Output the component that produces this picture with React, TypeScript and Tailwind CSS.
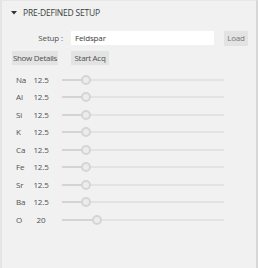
import React from "react";

const rows: { el: string; v: string; n: number }[] = [
  { el: "Na", v: "12.5", n: 12.5 },
  { el: "Al", v: "12.5", n: 12.5 },
  { el: "Si", v: "12.5", n: 12.5 },
  { el: "K", v: "12.5", n: 12.5 },
  { el: "Ca", v: "12.5", n: 12.5 },
  { el: "Fe", v: "12.5", n: 12.5 },
  { el: "Sr", v: "12.5", n: 12.5 },
  { el: "Ba", v: "12.5", n: 12.5 },
  { el: "O", v: "20", n: 20 },
];

function Slider({ n }: { n: number }) {
  const usable = 162 - 10;
  const x = 5 + (n / 100) * usable;
  return (
    <div className="relative h-[10px] w-[162px]">
      <div className="absolute left-0 right-0 top-[4px] h-[2px] bg-[#e2e3e2]" />
      <div className="absolute left-0 top-[4px] h-[2px] bg-[#d3d4d3]" style={{ width: x }} />
      <div
        className="absolute top-0 h-[10px] w-[10px] rounded-full border-2 border-[#d4d5d4] bg-[#ececec]"
        style={{ left: x - 5 }}
      />
    </div>
  );
}

export default function App() {
  return (
    <div
      className="w-[258px] h-[268px] bg-[#f0f1f0] border-l-2 border-r-2 border-l-[#e3e4e3] border-r-[#d6d7d6] border-t border-t-[#e6e7e6] text-[#505050] text-[8px] tracking-[-0.15px]"
      style={{ fontFamily: '"Open Sans", "Noto Sans", sans-serif' }}
    >
      <div className="flex items-center h-[22px] pt-[2px] pl-[9px]">
        <svg width="6" height="4" viewBox="0 0 6 4" className="mr-[6px]">
          <polygon points="0,0 6,0 3,3.5" fill="#333" />
        </svg>
        <span className="text-[8.5px] text-[#3c3c3c] tracking-[-0.2px]">PRE-DEFINED SETUP</span>
      </div>
      <div className="flex items-center h-[14px] mt-[8px]">
        <div className="w-[62px] text-right pr-[1px]">Setup :</div>
        <div className="ml-[7px] w-[143px] h-[14px] bg-white flex items-center pl-[4px] text-[#3c3c3c]">Feldspar</div>
        <div className="ml-[10px] w-[24px] h-[15px] bg-[#e2e3e2] flex items-center justify-center text-[#777]">Load</div>
      </div>
      <div className="flex items-center h-[14px] mt-[6px] pl-[10px]">
        <div className="w-[46px] h-[14px] bg-[#e2e3e2] flex items-center justify-center whitespace-nowrap tracking-[-0.3px]">Show Details</div>
        <div className="ml-[13px] w-[38px] h-[14px] bg-[#e2e3e2] flex items-center justify-center whitespace-nowrap tracking-[-0.3px]">Start Acq</div>
      </div>
      <div className="flex flex-col mt-[6px]">
        {rows.map((r) => (
          <div key={r.el} className="flex items-center h-[17.5px]">
            <div className="w-[31px] pl-[14px]">{r.el}</div>
            <div className="w-[16px] text-center">{r.v}</div>
            <div className="ml-[13px]">
              <Slider n={r.n} />
            </div>
          </div>
        ))}
      </div>
    </div>
  );
}
